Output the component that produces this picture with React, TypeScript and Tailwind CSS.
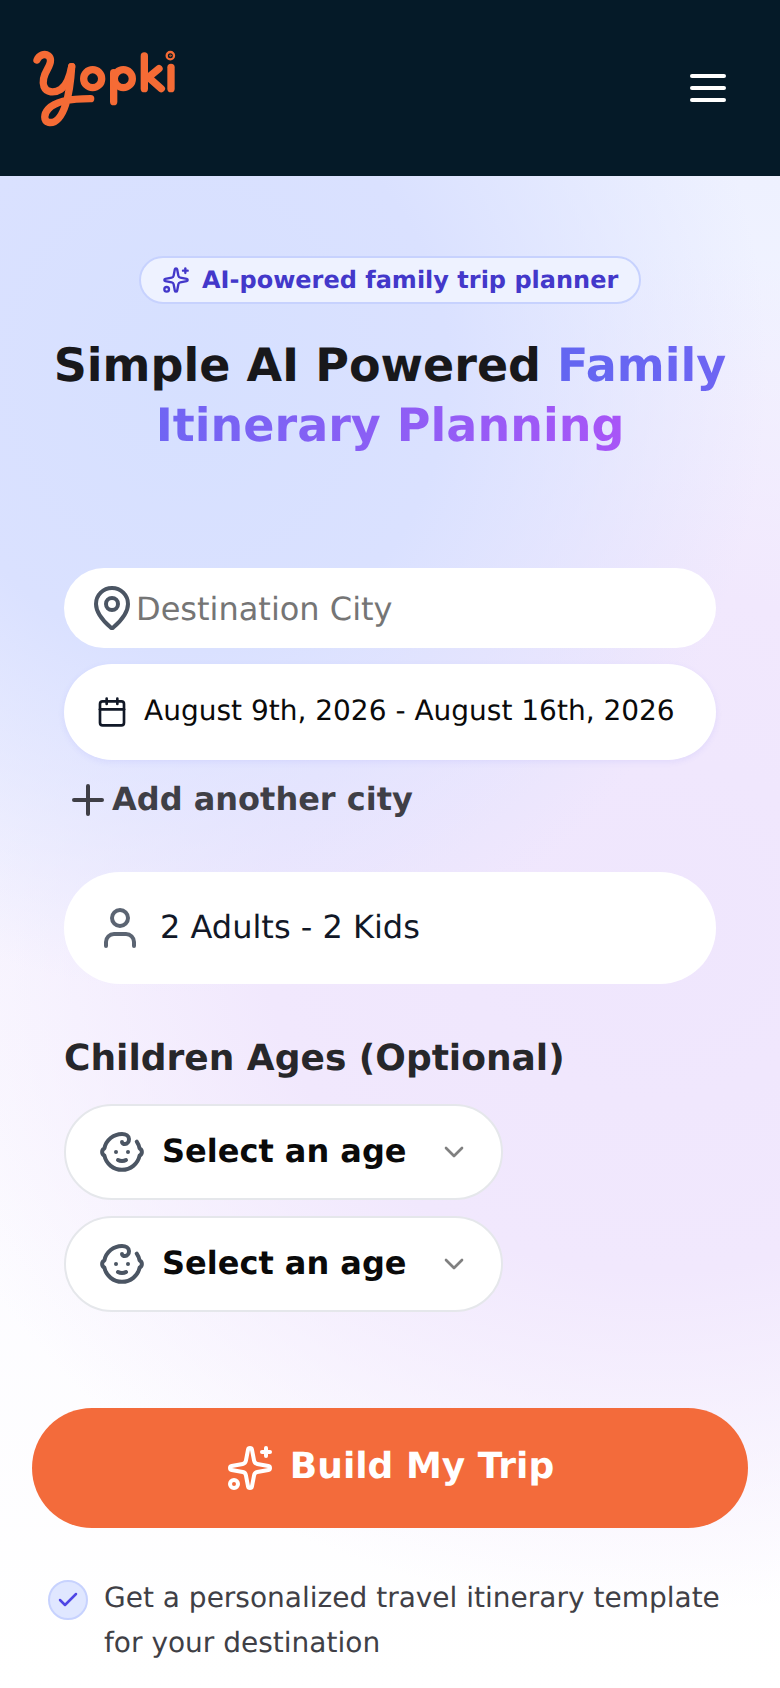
import { Baby, Calendar, Check, ChevronDown, MapPin, Plus, Sparkles, User } from "lucide-react";

function Logo() {
  return (
    <svg width="170" height="105" viewBox="0 0 510 315" fill="none" stroke="#F56B35" strokeWidth="22" strokeLinecap="round" strokeLinejoin="round" className="shrink-0">
      <path d="M51 72C57 57 74 51 85 59C97 68 91 84 82 100C72 117 66 135 72 152C79 170 103 172 122 160C142 147 150 118 155 92" />
      <path d="M155 92C153 125 150 165 137 205C126 240 108 263 86 259C70 255 71 234 85 219C103 199 140 188 212 188" />
      <circle cx="218" cy="128" r="27" />
      <path d="M281 197V110" />
      <circle cx="310" cy="128" r="27" />
      <path d="M373 60V158" />
      <path d="M417 98L385 124L424 158" />
      <path d="M453 94V158" />
      <circle cx="451" cy="59" r="11" strokeWidth="7" />
      <circle cx="451" cy="59" r="2.5" strokeWidth="2" />
    </svg>
  );
}

function AgeSelect() {
  return (
    <div className="flex h-[96px] w-[439px] items-center rounded-full border-2 border-[#e5e7eb] bg-white pl-[32px] pr-[31px]">
      <Baby size={48} strokeWidth={2} className="shrink-0 text-[#4b5563]" />
      <span className="-mt-[2px] ml-[16px] flex-1 text-[32px] font-bold text-[#0a0a0a]">Select an age</span>
      <ChevronDown size={32} strokeWidth={2} className="shrink-0 text-[#808080]" />
    </div>
  );
}

export default function App() {
  return (
    <div className="flex h-[1688px] flex-col overflow-hidden font-['DejaVu_Sans',sans-serif] [text-rendering:geometricPrecision]">
      <header className="flex h-[176px] shrink-0 items-center justify-between bg-[#051a28] pl-[20px] pr-[54px]">
        <Logo />
        <div className="flex flex-col gap-[8px]">
          <div className="h-[4px] w-[36px] rounded-full bg-white" />
          <div className="h-[4px] w-[36px] rounded-full bg-white" />
          <div className="h-[4px] w-[36px] rounded-full bg-white" />
        </div>
      </header>
      <main className="flex flex-1 flex-col bg-[radial-gradient(ellipse_580px_620px_at_24%_13%,#d6e0ff_0%,#dae1ff_45%,rgba(218,225,255,0)_100%),radial-gradient(ellipse_780px_680px_at_84%_50%,#efe6fd_0%,#f1e8fd_50%,rgba(241,232,253,0)_100%),linear-gradient(180deg,#eef1ff_0%,#fbfaff_55%,#ffffff_100%)]">
        <div className="mt-[80px] flex justify-center">
          <div className="flex h-[48px] w-[502px] items-center rounded-full border-2 border-[#c7d2fe] bg-[#eef2ff] pl-[21px]">
            <Sparkles size={28} strokeWidth={2} className="shrink-0 text-[#4338ca]" />
            <span className="ml-[12px] text-[24px] font-bold text-[#4338ca]">AI-powered family trip planner</span>
          </div>
        </div>
        <h1 className="mt-[31px] text-center text-[46px] font-bold leading-[60px] text-[#18181b]">
          Simple AI Powered{" "}
          <span className="bg-gradient-to-r from-[#6366f1] to-[#6e65f3] bg-clip-text text-transparent">Family</span>{" "}
          <span className="bg-gradient-to-r from-[#6f65f3] to-[#a855f7] bg-clip-text text-transparent">Itinerary Planning</span>
        </h1>
        <div className="mx-[64px] mt-[113px] flex flex-col">
          <div className="flex h-[80px] items-center rounded-full bg-white pl-[24px]">
            <MapPin size={48} strokeWidth={2} className="shrink-0 text-[#4b5563]" />
            <input placeholder="Destination City" className="mt-[1px] min-w-0 flex-1 text-[32px] text-[#111827] outline-none [text-rendering:geometricPrecision] placeholder:text-[#757575]" />
          </div>
          <div className="mt-[16px] flex h-[96px] items-center rounded-full bg-white pl-[32px] shadow-[0_2px_6px_rgba(99,102,241,0.10)]">
            <Calendar size={32} strokeWidth={2} className="shrink-0 text-[#111827]" />
            <span className="-mt-[2px] ml-[16px] text-[28px] text-[#0a0a0a]">August 9th, 2026 - August 16th, 2026</span>
          </div>
          <div className="mt-[16px] flex h-[48px] items-center">
            <Plus size={48} strokeWidth={2} className="shrink-0 text-[#3f3f46]" />
            <span className="-mt-[2px] text-[32px] font-bold text-[#3f3f46]">Add another city</span>
          </div>
          <div className="mt-[48px] flex h-[112px] items-center rounded-full bg-white pl-[32px]">
            <User size={48} strokeWidth={2} className="shrink-0 text-[#5b6472]" />
            <span className="-mt-[2px] ml-[16px] text-[32px] text-[#111827]">2 Adults - 2 Kids</span>
          </div>
          <h2 className="mt-[52px] text-[36px] font-bold leading-[46px] text-[#27272a]">Children Ages (Optional)</h2>
          <div className="mt-[22px] flex flex-col gap-[16px]">
            <AgeSelect />
            <AgeSelect />
          </div>
        </div>
        <div className="mx-[32px] mt-[96px] flex h-[120px] items-center justify-center rounded-full bg-[#f36b3b]">
          <Sparkles size={48} strokeWidth={2} className="shrink-0 text-white" />
          <span className="-mt-[3px] ml-[16px] text-[36px] font-bold text-white">Build My Trip</span>
        </div>
        <div className="ml-[48px] mr-[40px] mt-[52px] flex items-start">
          <div className="flex h-[40px] w-[40px] shrink-0 items-center justify-center rounded-full border-2 border-[#c7d2fe] bg-[#e0e7ff]">
            <Check size={24} strokeWidth={2.5} className="text-[#4f46e5]" />
          </div>
          <p className="-mt-[5px] ml-[16px] text-[28px] leading-[45px] text-[#3f3f46]">Get a personalized travel itinerary template for your destination</p>
        </div>
      </main>
    </div>
  );
}
